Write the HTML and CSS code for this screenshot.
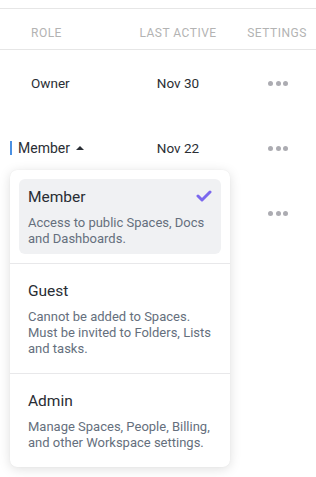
FILE: index.html
```html
<!DOCTYPE html>
<html lang="en">
<head>
    <meta charset="UTF-8">
    <meta name="viewport" content="width=device-width, initial-scale=1.0">
    <title>Members</title>
    <link rel="stylesheet" href="styles.css">
</head>
<body>
    <div class="members">
        <div class="table-head">
            <div class="col-role">Role</div>
            <div class="col-active">Last active</div>
            <div class="col-settings">Settings</div>
        </div>

        <div class="row">
            <div class="col-role">Owner</div>
            <div class="col-active">Nov 30</div>
            <div class="col-settings"><span class="dots"><i></i><i></i><i></i></span></div>
        </div>

        <div class="row">
            <div class="col-role">
                <button class="role-select">Member <span class="caret"></span></button>
            </div>
            <div class="col-active">Nov 22</div>
            <div class="col-settings"><span class="dots"><i></i><i></i><i></i></span></div>
        </div>

        <div class="row">
            <div class="col-role"></div>
            <div class="col-active"></div>
            <div class="col-settings"><span class="dots"><i></i><i></i><i></i></span></div>
        </div>

        <!-- role picker, open over the rows -->
        <div class="role-menu">
            <div class="role-section">
                <div class="role-option selected">
                    <div class="role-title">
                        Member
                        <svg class="check" viewBox="0 0 16 13" xmlns="http://www.w3.org/2000/svg">
                            <path d="M2 7l4 4 8-8" fill="none" stroke="currentColor" stroke-width="3" stroke-linecap="round" stroke-linejoin="round"/>
                        </svg>
                    </div>
                    <div class="role-desc">Access to public Spaces, Docs and Dashboards.</div>
                </div>
            </div>
            <div class="role-section">
                <div class="role-option">
                    <div class="role-title">Guest</div>
                    <div class="role-desc">Cannot be added to Spaces. Must be invited to Folders, Lists and tasks.</div>
                </div>
            </div>
            <div class="role-section">
                <div class="role-option">
                    <div class="role-title">Admin</div>
                    <div class="role-desc">Manage Spaces, People, Billing, and other Workspace settings.</div>
                </div>
            </div>
        </div>
    </div>
</body>
</html>
```

FILE: styles.css
```css
* {
    margin: 0;
    padding: 0;
    box-sizing: border-box;
}

body {
    background: #ffffff;
    font-family: Roboto, "Noto Sans", sans-serif;
    color: #2a2e34;
}

.members {
    position: relative;
    min-height: 477px;
    padding-top: 8px;
}

.table-head,
.row {
    display: grid;
    grid-template-columns: 118px 120px 78px;
    align-items: center;
}

.table-head {
    height: 42px;
    padding-top: 7px;
    border-top: 1px solid #e6e6e6;
    border-bottom: 1px solid #e6e6e6;
    font-size: 12px;
    letter-spacing: 0.5px;
    text-transform: uppercase;
    color: #b3b3b3;
}

.row {
    height: 65px;
    font-size: 13.5px;
}

.col-role {
    padding-left: 31px;
}

.col-active,
.col-settings {
    text-align: center;
}

.role-select {
    display: flex;
    align-items: center;
    gap: 6px;
    margin-left: -21px;
    padding-left: 6px;
    height: 14px;
    border: none;
    border-left: 2px solid #4a90e2;
    background: none;
    font: inherit;
    font-size: 14px;
    color: inherit;
}

.caret {
    width: 0;
    height: 0;
    border-left: 4px solid transparent;
    border-right: 4px solid transparent;
    border-bottom: 4px solid #2a2e34;
}

.dots {
    display: inline-flex;
    gap: 2.5px;
    margin-left: 2px;
    vertical-align: middle;
}

.dots i {
    width: 5px;
    height: 5px;
    border-radius: 50%;
    background: #acacb2;
}

.role-menu {
    position: absolute;
    left: 10px;
    top: 170px;
    width: 220px;
    background: #ffffff;
    border-radius: 7px;
    box-shadow: 0 2px 12px rgba(0, 0, 0, 0.13), 0 0 1px rgba(0, 0, 0, 0.08);
}

.role-section {
    padding: 9px;
}

.role-section + .role-section {
    border-top: 1px solid #e8e8ea;
}

.role-option {
    padding: 7px 8px 7px 9px;
    border-radius: 6px;
}

.role-option.selected {
    background: #f0f1f3;
}

.role-title {
    display: flex;
    justify-content: space-between;
    align-items: center;
    height: 21px;
    font-size: 15.5px;
    color: #292d34;
}

.check {
    width: 16px;
    height: 13px;
    margin-top: -3px;
    margin-right: 1px;
    color: #7b68ee;
}

.role-desc {
    margin-top: 8px;
    font-size: 13px;
    line-height: 16px;
    color: #656f7d;
}
```
